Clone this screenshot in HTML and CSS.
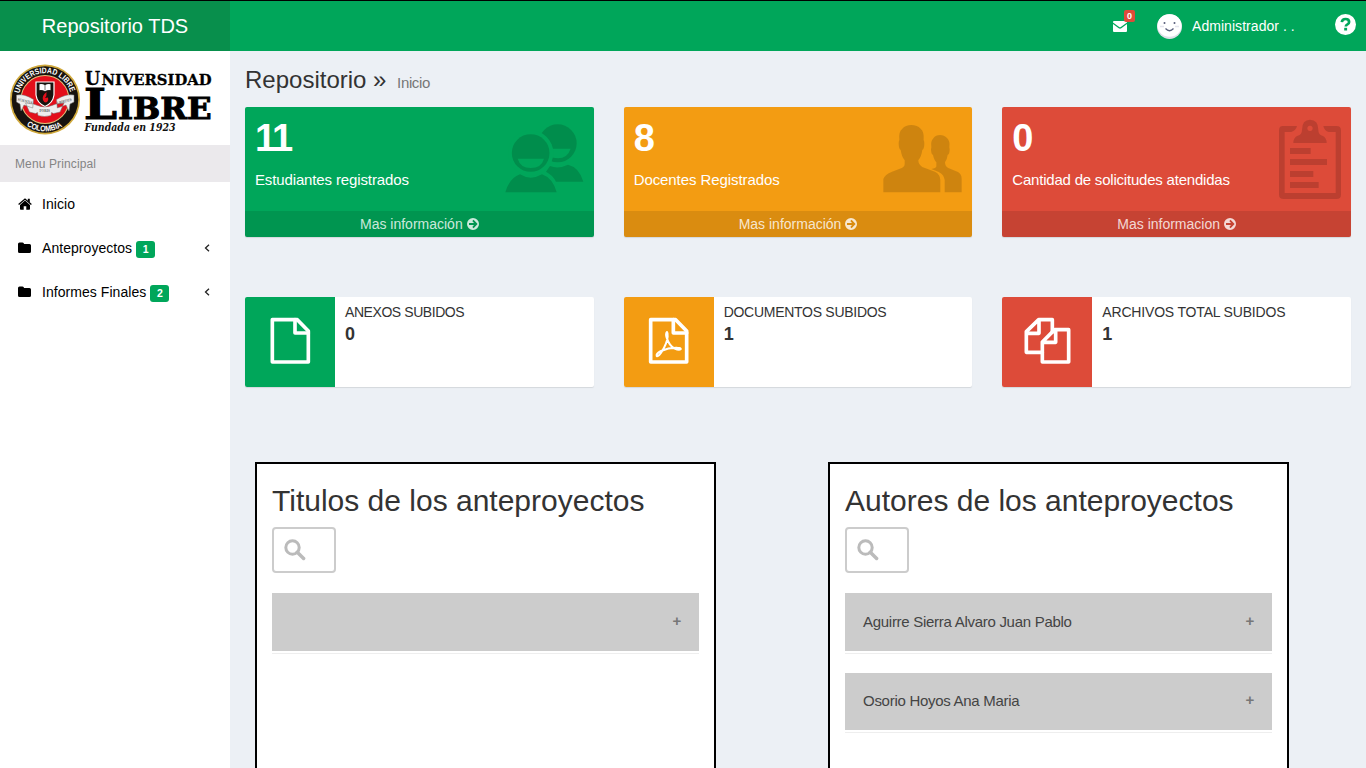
FILE: index.html
```html
<!DOCTYPE html>
<html lang="es">
<head>
<meta charset="utf-8">
<title>Repositorio TDS</title>
<link rel="stylesheet" href="styles.css">
</head>
<body>
<header class="topbar">
  <div class="brand">Repositorio TDS</div>
  <nav class="topnav">
    <div class="mail">
      <svg width="14" height="11" viewBox="0 0 14 11"><path fill="#fff" d="M0 1q0-1 1-1h12q1 0 1 1v.5L7.8 6q-.8.6-1.6 0L0 1.500zM0 3l5.700 4.200q1.300.9 2.600 0L14 3v7q0 1-1 1H1q-1 0-1-1z"/></svg>
      <span class="mail-count">0</span>
    </div>
    <div class="user">
      <svg width="25" height="25" viewBox="0 0 25 25"><circle cx="12.500" cy="12.500" r="12.500" fill="#dfdfe8"/><ellipse cx="12.500" cy="11.500" rx="12" ry="11.300" fill="#fff"/><circle cx="7.500" cy="9" r="1" fill="#5a5f7c"/><circle cx="17.500" cy="9" r="1" fill="#5a5f7c"/><path d="M3 12.500h4M18 12.500h4" stroke="#e3e3ec" stroke-width="1.500"/><path d="M8.500 14.500q4 4.500 8 0" fill="none" stroke="#5a5f7c" stroke-width="1.300"/></svg>
      <span>Administrador . .</span>
    </div>
    <svg class="help" width="21" height="21" viewBox="0 0 21 21"><circle cx="10.500" cy="10.500" r="10.500" fill="#fff"/><path d="M6.800 8.200Q7.200 5 10.600 5q3.500 0 3.500 2.900 0 1.500-1.700 2.500-1.600.8-1.600 2" fill="none" stroke="#00a65a" stroke-width="2.700"/><rect x="9.200" y="13.800" width="2.900" height="2.700" fill="#00a65a"/></svg>
  </nav>
</header>
<div class="wrapper">
  <aside class="sidebar">
    <div class="crest">
      <svg width="230" height="94" viewBox="0 51 230 94">
        <defs>
          <path id="arc-top" d="M19.300 93.500A26.400 26.400 0 0 1 70.700 93.500"/>
          <path id="arc-bottom" d="M26.500 125.500A32 32 0 0 0 63.500 125.500"/>
        </defs>
        <circle cx="45" cy="99.500" r="35" fill="#d0a93c"/>
        <circle cx="45" cy="99.500" r="33.300" fill="#17130f"/>
        <circle cx="45" cy="99.500" r="24.500" fill="#e3c27a"/>
        <circle cx="45" cy="99.500" r="23.500" fill="#e30f1b"/>
        <text class="crest-ring" textLength="69" lengthAdjust="spacingAndGlyphs"><textPath href="#arc-top">UNIVERSIDAD LIBRE</textPath></text>
        <text class="crest-ring" textLength="38" lengthAdjust="spacingAndGlyphs"><textPath href="#arc-bottom">COLOMBIA</textPath></text>
        <path d="M36 82h18v13q-1 8-9 11.500Q37 103 36 95z" fill="#17130f" stroke="#fff" stroke-width="1.200"/>
        <path d="M39.500 84.200q3-.6 5.500 1 2.500-1.600 5.500-1v6q-3-.4-5.500 1-2.500-1.400-5.500-1z" fill="#fff"/>
        <path d="M45 84.500v6" stroke="#555" stroke-width=".8"/>
        <path d="M46.500 92q-5 4-3.500 8 1 2.500 3 2.500 3-1.500 2-5l-3 .5q2-2 1.500-6z" fill="#e30f1b"/>
        <path d="M16.500 95q8-1.500 17 4.500l-.8 8.500q-6-2-8.700-3l-3 6-1-7-3.500-2zM74 95q-8-1.500-17.500 4.500l.8 8.500q6-2 8.700-3l3 6 1-7 4-2zM37.500 105.500q7 3 14.500 0l4-1.500 8-1-4 9-6.500 1.500-2-1-.5 3q-6.500 2-13 0l-.5-3-2 1-6-1.500-4-9 8 1z" fill="#eee" stroke="#777" stroke-width=".5"/>
        <g class="crest-ribbon">
          <text transform="translate(17.500 100.500) rotate(14)" textLength="15" lengthAdjust="spacingAndGlyphs">SCIENTIA</text>
          <text x="39.500" y="111.500" textLength="10.500" lengthAdjust="spacingAndGlyphs">FORIS</text>
          <text transform="translate(57.500 104.500) rotate(-15)" textLength="15" lengthAdjust="spacingAndGlyphs">LIBERTATIS</text>
        </g>
        <g class="crest-name">
          <text x="84.800" y="85" font-size="19" textLength="15.500" lengthAdjust="spacingAndGlyphs">U</text>
          <text x="101.500" y="85" font-size="14.500" textLength="110" lengthAdjust="spacingAndGlyphs">NIVERSIDAD</text>
          <g stroke-width="1.100">
            <text x="84" y="119.300" font-size="42" textLength="33" lengthAdjust="spacingAndGlyphs">L</text>
            <text x="118" y="119.300" font-size="30.500" textLength="93.500" lengthAdjust="spacingAndGlyphs">IBRE</text>
          </g>
        </g>
        <text class="crest-founded" x="84.500" y="131" textLength="91" lengthAdjust="spacingAndGlyphs">Fundada en 1923</text>
      </svg>
    </div>
    <div class="menu-title">Menu Principal</div>
    <a class="menu-item">
      <svg width="14" height="12" viewBox="0 0 14 12"><path d="M7 2.600 12 7v4q0 .8-.8.800H8.300V8.200H5.700v3.600H2.800Q2 11.800 2 11V7z"/><path d="M.6 6.500 7 1.100l6.400 5.400" fill="none" stroke="#000" stroke-width="1.300"/><path d="M9.800.7h2v4l-2-1.700z"/></svg>
      <span>Inicio</span>
    </a>
    <a class="menu-item">
      <svg width="14" height="12" viewBox="0 0 14 12"><path d="M0 2q0-1.500 1.500-1.500h3Q6 .5 6 2h5.500Q13 2 13 3.500v6q0 1.500-1.500 1.500h-10Q0 11 0 9.500z"/></svg>
      <span>Anteproyectos</span><b class="count">1</b>
      <svg class="chevron" width="6" height="8" viewBox="0 0 6 8"><path d="M5 .7 1.500 4 5 7.300" fill="none" stroke="#222" stroke-width="1.300"/></svg>
    </a>
    <a class="menu-item">
      <svg width="14" height="12" viewBox="0 0 14 12"><path d="M0 2q0-1.500 1.500-1.500h3Q6 .5 6 2h5.500Q13 2 13 3.500v6q0 1.500-1.500 1.500h-10Q0 11 0 9.500z"/></svg>
      <span>Informes Finales</span><b class="count">2</b>
      <svg class="chevron" width="6" height="8" viewBox="0 0 6 8"><path d="M5 .7 1.500 4 5 7.300" fill="none" stroke="#222" stroke-width="1.300"/></svg>
    </a>
  </aside>
  <main class="content">
    <h1 class="page-title">Repositorio » <small>Inicio</small></h1>
    <section class="row stats">
      <div class="stat green">
        <div class="stat-inner">
          <div><h3 class="tight">11</h3><p>Estudiantes registrados</p></div>
          <svg class="stat-icon" width="80" height="72" viewBox="42 70 240 216"><circle cx="203" cy="131" r="57"/><path d="M150 147h92q-10 29-38 29t-54-29z" fill="#00a65a"/><circle cx="122" cy="160" r="68" fill="#00a65a"/><circle cx="122" cy="160" r="56.500"/><path d="M83 177h79q-8 28-39.500 28T83 177z" fill="#00a65a"/><path d="M180 199q25 10 54-4 34 8 46 51h-82q-10-20-30-30z"/><path d="M46 278q12-43 44-54 32 20 66 0 32 11 44 54z"/></svg>
        </div>
        <a class="stat-more">Mas información <svg width="12" height="12" viewBox="0 0 12 12"><path fill-rule="evenodd" d="M6 0a6 6 0 1 1 0 12A6 6 0 0 1 6 0zM5.300 2.900 7 4.900H2v2.200h5l-1.700 2 1.300 1.200L10.600 6 6.600 1.700z"/></svg></a>
      </div>
      <div class="stat orange">
        <div class="stat-inner">
          <div><h3>8</h3><p>Docentes Registrados</p></div>
          <svg class="stat-icon" width="80" height="72" viewBox="68 70 240 216"><path d="M72 278v-40q4-14 26-22l29-11q9-4 9-13v-10q-9-10-12-31-6-3-6-20 0-6 2-10-3-25 9-34 9-11 27-11t28 11q11 9 9 34 2 4 2 10 0 17-6 20-3 21-12 31 0 12 12 20l38 14q16 8 16 25v37z"/><path d="M256 278v-37q-2-16-18-24l-22-9q14-2 15-8v-12q-7-6-10-22-6-2-6-17l1-6q-3-18 6-27 7-10 20-10t21 9q10 9 7 28l1 6q0 15-6 17-2 15-8 22 0 12 10 17l29 12q11 6 11 20v41z"/></svg>
        </div>
        <a class="stat-more">Mas información <svg width="12" height="12" viewBox="0 0 12 12"><path fill-rule="evenodd" d="M6 0a6 6 0 1 1 0 12A6 6 0 0 1 6 0zM5.300 2.900 7 4.900H2v2.200h5l-1.700 2 1.300 1.200L10.600 6 6.600 1.700z"/></svg></a>
      </div>
      <div class="stat red">
        <div class="stat-inner">
          <div><h3>0</h3><p>Cantidad de solicitudes atendidas</p></div>
          <svg class="stat-icon clip" width="63" height="82" viewBox="85 57 189 246"><path d="M99 78h43q-3 14-17 18h-20v183h153V96h-21q-13-3-16-18h40q13 0 13 13v193q0 13-13 13H102q-14 0-14-13V91q0-13 11-13zM121 144h62v18h-62zM121 177h111v18H121zM121 213h70v18h-70zM121 246h86v18h-86z"/><path fill-rule="evenodd" d="M131 129q0-17 13-22 13-3 13-18 0-30 24-30 25 0 25 30 0 15 12 18 13 5 13 22zM181 77a8 8 0 1 0 .1 0z"/></svg>
        </div>
        <a class="stat-more">Mas informacion <svg width="12" height="12" viewBox="0 0 12 12"><path fill-rule="evenodd" d="M6 0a6 6 0 1 1 0 12A6 6 0 0 1 6 0zM5.300 2.900 7 4.900H2v2.200h5l-1.700 2 1.300 1.200L10.600 6 6.600 1.700z"/></svg></a>
      </div>
    </section>
    <section class="row infos">
      <div class="info">
        <div class="info-icon green"><svg width="90" height="90" viewBox="15 21 270 270"><path d="M97 89h75l33 34v93H97z"/><path d="M165 89v40h40"/></svg></div>
        <div class="info-text anexos"><span>ANEXOS SUBIDOS</span><b>0</b></div>
      </div>
      <div class="info">
        <div class="info-icon orange"><svg width="90" height="90" viewBox="12 21 270 270"><path d="M92 89h75l33 34v93H92z"/><path d="M160 89v40h40"/><path class="fine" d="M141 126q-5 6-1 17 8 25 24 33 13 6 18 2 2-5-10-5-25-1-49 10-15 8-13 15 6 3 16-14 15-24 17-44 1-11-2-14z"/></svg></div>
        <div class="info-text documentos"><span>DOCUMENTOS SUBIDOS</span><b>1</b></div>
      </div>
      <div class="info">
        <div class="info-icon red"><svg width="90" height="90" viewBox="21 21 270 270"><path d="M142 187H94v-62l37-36h41v36M94 130h38V89"/><path d="M142 156l37-37h42v97h-79zM142 157h40v-38"/></svg></div>
        <div class="info-text archivos"><span>ARCHIVOS TOTAL SUBIDOS</span><b>1</b></div>
      </div>
    </section>
    <section class="panels">
      <div class="panel">
        <h2>Titulos de los anteproyectos</h2>
        <div class="search"><svg width="22" height="22" viewBox="0 0 22 22"><circle cx="8.500" cy="8.500" r="6.700" fill="none" stroke="#bbb" stroke-width="3"/><path d="m13.300 13.300 6.300 6.200" stroke="#bbb" stroke-width="3.500" stroke-linecap="round"/></svg></div>
        <div class="entry"><span></span><b>+</b></div>
      </div>
      <div class="panel">
        <h2>Autores de los anteproyectos</h2>
        <div class="search"><svg width="22" height="22" viewBox="0 0 22 22"><circle cx="8.500" cy="8.500" r="6.700" fill="none" stroke="#bbb" stroke-width="3"/><path d="m13.300 13.300 6.300 6.200" stroke="#bbb" stroke-width="3.500" stroke-linecap="round"/></svg></div>
        <div class="entry"><span>Aguirre Sierra Alvaro Juan Pablo</span><b>+</b></div>
        <div class="entry"><span>Osorio Hoyos Ana Maria</span><b>+</b></div>
      </div>
    </section>
  </main>
</div>
</body>
</html>
```
FILE: styles.css
```css
* { box-sizing: border-box; }
body {
  margin: 0;
  height: 768px;
  overflow: hidden;
  font: 14px/20px "Liberation Sans", Arial, sans-serif;
  color: #333;
  background: #ecf0f5;
}
h1, h2, h3, p { margin: 0; }
svg { display: block; flex: none; }

.topbar { display: flex; height: 51px; border-top: 1px solid #000; background: #00a65a; color: #fff; }
.brand { width: 230px; background: #088f4c; font-size: 20px; line-height: 50px; text-align: center; }
.topnav { flex: 1; display: flex; justify-content: flex-end; align-items: center; padding-right: 10px; }
.mail { position: relative; margin-right: 30px; }
.mail-count {
  position: absolute; left: 11px; top: -11px;
  width: 11px; height: 12px; border-radius: 2px;
  background: #dd4b39; font-size: 9px; font-weight: bold; line-height: 12px; text-align: center;
}
.user { display: flex; align-items: center; gap: 10px; width: 178px; letter-spacing: .05px; }
.help { margin-top: -3px; }

.wrapper { display: flex; height: 717px; }
.sidebar { width: 230px; background: #fff; }
.crest { height: 94px; }
.crest-ring { font: bold 8px "Liberation Sans Narrow", "Liberation Sans", sans-serif; fill: #fff; }
.crest-ribbon { font: bold 4px "Liberation Serif", serif; fill: #555; }
.crest-name { font-family: "DejaVu Serif", serif; font-weight: bold; fill: #000; stroke: #000; stroke-width: .3px; }
.crest-name g { stroke-width: 1.1px; }
.crest-founded { font: italic bold 10.500px "DejaVu Serif", serif; fill: #111; }
.menu-title { height: 37px; padding-left: 15px; background: #ebe9ec; color: #848484; font-size: 12px; line-height: 38px; letter-spacing: .12px; }
.menu-item { display: flex; align-items: center; height: 44px; padding: 0 20px 0 18px; color: #000; }
.menu-item span { margin-left: 10px; letter-spacing: .05px; }
.count { width: 19px; height: 17px; margin: 2px 0 0 4px; border-radius: 3px; background: #00a65a; color: #fff; font-size: 10.500px; line-height: 17px; text-align: center; }
.chevron { margin-left: auto; }

.content { flex: 1; padding: 14px 15px 0; }
.page-title { height: 42px; font-size: 24px; font-weight: normal; line-height: 30px; }
.page-title small { margin-left: 4px; font-size: 15px; letter-spacing: -.35px; color: #777; }
.row { display: grid; grid-template-columns: repeat(3, 1fr); gap: 30px; }
.green { background: #00a65a; }
.orange { background: #f39c12; }
.red { background: #dd4b39; }
.stat { height: 130px; border-radius: 2px; overflow: hidden; color: #fff; box-shadow: 0 1px 1px rgba(0, 0, 0, .1); }
.stat-inner { display: flex; justify-content: space-between; height: 104px; padding: 10px 10px 0; }
.stat h3 { height: 52px; font-size: 38px; line-height: 42px; }
.stat h3.tight { letter-spacing: -2px; }
.stat p { font-size: 15px; line-height: 22px; letter-spacing: -.13px; }
.stat.orange p { letter-spacing: -.08px; }
.stat.red p { letter-spacing: -.21px; }
.stat-icon { margin-top: 6px; fill: rgba(0, 0, 0, .15); }
.stat.green .stat-icon { fill: #008d4c; }
.stat-icon.clip { margin-top: 2px; }
.stat-more { display: flex; justify-content: center; align-items: center; gap: 4px; height: 26px; background: rgba(0, 0, 0, .1); color: rgba(255, 255, 255, .8); }
.stat-more svg { fill: currentColor; }

.infos { margin-top: 60px; }
.info { display: flex; height: 90px; border-radius: 2px; overflow: hidden; background: #fff; box-shadow: 0 1px 1px rgba(0, 0, 0, .1); }
.info-icon { width: 90px; }
.info-icon path { fill: none; stroke: #fff; stroke-width: 11px; stroke-linejoin: round; stroke-linecap: round; }
.info-icon .fine { stroke-width: 6px; }
.info-text { display: flex; flex-direction: column; padding: 5px 10px; }
.info-text b { margin-top: 2px; font-size: 18px; }
.anexos span { letter-spacing: -.43px; }
.documentos span { letter-spacing: -.28px; }
.archivos span { letter-spacing: -.18px; }

.panels { display: flex; gap: 112px; margin-top: 75px; padding-left: 10px; }
.panel { width: 461px; height: 306px; border: 2px solid #000; border-bottom: 0; padding: 20px 15px 0; background: #fff; }
.panel h2 { height: 43px; font-size: 30px; font-weight: normal; line-height: 33px; }
.search { width: 64px; height: 46px; margin-bottom: 20px; padding: 10px; border: 2px solid #ccc; border-radius: 4px; }
.entry { display: flex; justify-content: space-between; align-items: center; height: 57.500px; margin-bottom: 22px; padding: 0 18px; background: #ccc; color: #444; font-size: 15px; letter-spacing: -.28px; box-shadow: 0 2px 0 #fff, 0 3px 0 #eee; }
.entry b { margin-top: -2px; color: #777; font-size: 15px; }
```
